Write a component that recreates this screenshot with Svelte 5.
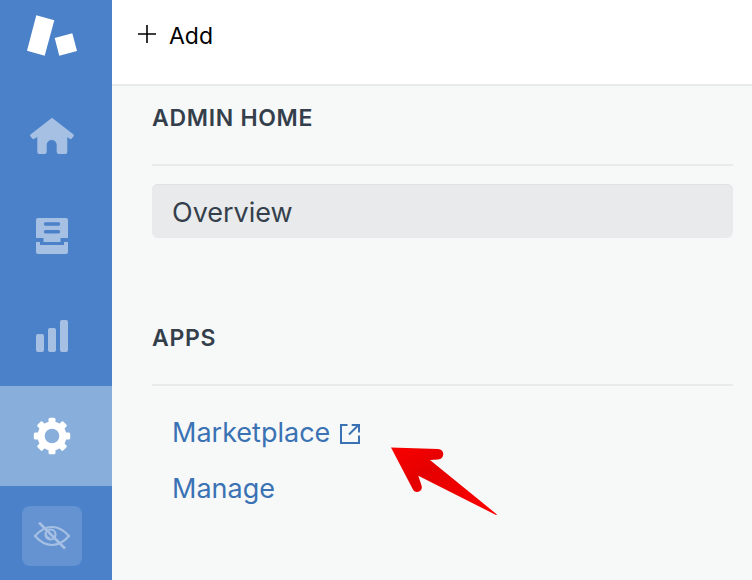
<script>
	const navItems = [
		{ id: 'home', active: false },
		{ id: 'inbox', active: false },
		{ id: 'reports', active: false },
		{ id: 'settings', active: true }
	];

	const gearTeeth = [0, 45, 90, 135, 180, 225, 270, 315];
</script>

<div class="layout">
	<aside class="sidebar">
		<div class="logo">
			<svg width="50" height="60" viewBox="0 0 50 60" fill="#fff">
				<polygon points="9.3,15.3 27.3,20.3 17.7,55.7 0,50.7" />
				<polygon points="27.7,38 45.3,33.3 50,51 32.300,55.7" />
			</svg>
		</div>

		{#each navItems as item}
			<div class="nav-item" class:active={item.active}>
				{#if item.id === 'home'}
					<svg width="46" height="38" viewBox="0 0 46 38" fill="#a6c0e4">
						<path d="M23 0.7 L44.500 17.500 Q45.300 18.300 44.600 19.300 L42.800 21.500 Q41.800 22.500 40.700 21.700 L38.300 20 V35 Q38.300 37 36.300 37 H29.700 Q27.700 37 27.700 35 V28 A5 5 0 0 0 17.700 28 V35 Q17.700 37 15.700 37 H10.300 Q8.300 37 8.300 35 V20 L5.300 21.700 Q4.200 22.500 3.200 21.500 L1.400 19.300 Q0.700 18.300 1.500 17.500 Z" />
					</svg>
				{:else if item.id === 'inbox'}
					<svg width="34" height="36" viewBox="0 0 34 36" fill="#a6c0e4">
						<path fill-rule="evenodd" d="M3 0 H31 Q33 0 33 2 V20 H25.500 V24 H8.500 V20 H1 V2 Q1 0 3 0 Z M10.500 4.300 Q8.800 4.300 8.800 6 Q8.800 7.700 10.500 7.700 H23.500 Q25.200 7.700 25.200 6 Q25.200 4.300 23.500 4.300 Z M10.500 12 Q8.800 12 8.800 13.800 Q8.800 15.600 10.500 15.600 H23.500 Q25.200 15.600 25.200 13.800 Q25.200 12 23.500 12 Z" />
						<path d="M1 24 H5 V27 H29 V24 H33 V34 Q33 36 31 36 H3 Q1 36 1 34 Z" />
					</svg>
				{:else if item.id === 'reports'}
					<svg width="34" height="32" viewBox="0 0 34 32" fill="#a6c0e4">
						<rect x="1" y="14" width="8" height="18" rx="2" />
						<rect x="13" y="8" width="8" height="24" rx="2" />
						<rect x="25" y="0" width="8" height="32" rx="2" />
					</svg>
				{:else}
					<svg width="38" height="38" viewBox="-19 -19 38 38" fill="#fff">
						{#each gearTeeth as angle}
							<rect x="-3.500" y="-18.200" width="7" height="8" rx="1.500" transform="rotate({angle})" />
						{/each}
						<path fill-rule="evenodd" d="M-14.500 0 A14.500 14.500 0 1 1 14.500 0 A14.500 14.500 0 1 1 -14.500 0 Z M-7.300 0 A7.300 7.300 0 1 0 7.300 0 A7.300 7.300 0 1 0 -7.300 0 Z" />
					</svg>
				{/if}
			</div>
		{/each}

		<div class="toggle">
			<svg width="38" height="28" viewBox="0 0 38 28" fill="none" stroke="#a6c0e4" stroke-width="2.200">
				<path d="M2 14 Q10 5 19 5 Q28 5 36 14 Q28 23 19 23 Q10 23 2 14 Z" />
				<circle cx="17.500" cy="12.500" r="5" />
				<path d="M17 16 A4 4 0 0 1 13 12" />
				<path d="M6 0.500 L32 26.500" stroke-width="2.600" />
			</svg>
		</div>
	</aside>

	<div class="content">
		<header class="topbar">
			<svg class="plus" width="18" height="18" viewBox="0 0 18 18" stroke="#000" stroke-width="1.600">
				<path d="M9 0 V18 M0 9 H18" />
			</svg>
			<span>Add</span>
		</header>

		<main class="panel">
			<section class="group">
				<h2>ADMIN HOME</h2>
				<a class="link current" href="#overview">Overview</a>
			</section>

			<section class="group apps">
				<h2>APPS</h2>
				<div class="links">
					<a class="link blue" href="#marketplace">
						Marketplace
						<svg class="external" width="20" height="20" viewBox="0 0 20 20" fill="none" stroke="#3a72b4" stroke-width="2">
							<path d="M7.500 1 H1 V19 H19 V11.500" />
							<path d="M9 10.500 L18.500 1 M11.700 1 H19 V8.500" />
						</svg>
					</a>
					<a class="link blue" href="#manage">Manage</a>
				</div>
			</section>
		</main>
	</div>

	<svg class="arrow" width="110" height="74" viewBox="0 0 110 74">
		<defs>
			<linearGradient id="arrowFill" x1="0" y1="0" x2="1" y2="1">
				<stop offset="0" stop-color="#fa0000" />
				<stop offset="0.35" stop-color="#e40000" />
				<stop offset="1" stop-color="#ff0000" />
			</linearGradient>
		</defs>
		<path fill="url(#arrowFill)" d="M1 0.500 L48 2 Q53 2.500 53.300 7 Q53 12 48 12.500 L40 13 L107 67.500 L106 68 L28.300 28.700 L31.700 39 Q32.500 44.500 27 45 Q24 45 22.700 42 Z" />
	</svg>
</div>

<style>
	:global(body) {
		margin: 0;
		font-family: Inter, "Liberation Sans", sans-serif;
	}

	.layout {
		position: relative;
		display: flex;
		width: 752px;
		height: 580px;
		overflow: hidden;
	}

	.sidebar {
		display: flex;
		flex-direction: column;
		width: 112px;
		flex-shrink: 0;
		background: #4b81c8;
	}

	.logo {
		height: 86px;
		padding-left: 27px;
	}

	.nav-item {
		display: flex;
		align-items: center;
		justify-content: center;
		height: 100px;
		padding-right: 8px;
	}

	.nav-item.active {
		background: #88aedb;
	}

	.toggle {
		display: flex;
		align-items: center;
		justify-content: center;
		width: 60px;
		height: 60px;
		margin: 20px 0 0 22px;
		border-radius: 8px;
		background: #6592d1;
	}

	.content {
		flex: 1;
		display: flex;
		flex-direction: column;
		min-width: 0;
	}

	.topbar {
		display: flex;
		align-items: center;
		gap: 13px;
		height: 86px;
		padding: 0 0 12px 26px;
		box-sizing: border-box;
		background: #fff;
		border-bottom: 2px solid #e8eaeb;
		font-size: 23px;
		color: #000;
	}

	.plus {
		margin-top: -4px;
	}

	.panel {
		flex: 1;
		padding: 0 19px 0 40px;
		background: #f7f9f9;
	}

	.group h2 {
		margin: 0;
		height: 80px;
		line-height: 64px;
		border-bottom: 2px solid #e8eaeb;
		box-sizing: border-box;
		font-size: 23px;
		font-weight: 600;
		letter-spacing: 0.7px;
		color: #343f4b;
	}

	.apps {
		margin-top: 68px;
	}

	.links {
		margin-top: 18px;
	}

	.link {
		display: flex;
		align-items: center;
		height: 56px;
		padding-left: 20px;
		box-sizing: border-box;
		font-size: 27px;
		text-decoration: none;
	}

	.current {
		height: 54px;
		margin-top: 18px;
		padding-top: 2px;
		border-radius: 6px;
		background: #e9eaec;
		box-shadow: inset 0 1px 0 #dfe1e3;
		color: #343f4b;
	}

	.blue {
		color: #3a72b4;
	}

	.external {
		margin: 4px 0 0 10px;
	}

	.arrow {
		position: absolute;
		left: 390px;
		top: 447px;
	}
</style>
